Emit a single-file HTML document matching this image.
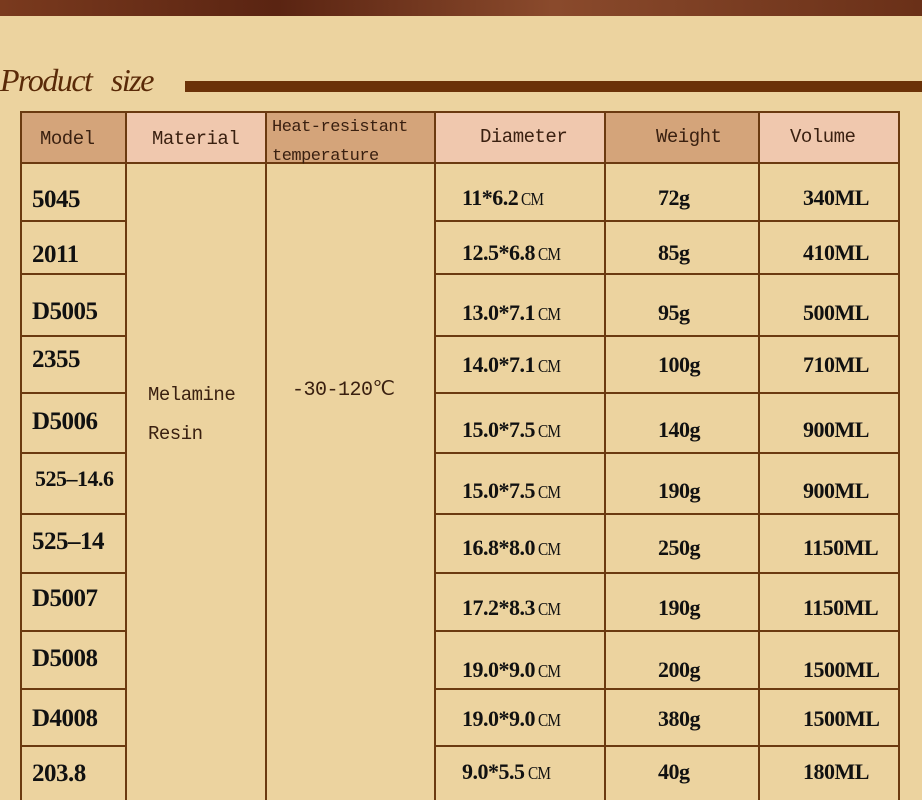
<!DOCTYPE html><html><head><style>
body{margin:0;width:922px;height:800px;overflow:hidden;background:#ecd39f;position:relative;font-family:"Liberation Serif",serif}
.a{position:absolute}
.top{left:0;top:0;width:922px;height:16px;background:linear-gradient(90deg,#7a3a1e,#5a2412 30%,#8a4a2c 60%,#6a3018)}
.t{left:0;top:62px;font-style:italic;font-size:32px;color:#5a2a08;letter-spacing:-1.5px}
.bar{left:185px;top:81px;width:737px;height:11px;background:#6b3208}
.h{font-family:"Liberation Mono",monospace;font-size:19px;color:#3a2010;box-sizing:border-box;border:2px solid #6b3a10;letter-spacing:-0.5px}
.vl{width:2px;background:#6b3a10}
.hl{height:2px;background:#6b3a10}
.c{font-weight:bold;font-size:22px;color:#111;letter-spacing:-0.5px}
.m{font-weight:bold;font-size:25px;color:#111;letter-spacing:-0.5px}
.cm{font-weight:normal;font-size:18px;margin-left:3px;letter-spacing:-1px;display:inline-block;transform:scaleX(0.85);transform-origin:left}
</style></head><body>
<div class="a top"></div>
<div class="a t">Product&nbsp;&nbsp; size</div>
<div class="a bar"></div>
<div class="a h" style="left:20px;top:111px;width:107px;height:53px;background:#d4a47a;padding:15px 0 0 18px">Model</div>
<div class="a h" style="left:125px;top:111px;width:142px;height:53px;background:#f0c8ae;padding:15px 0 0 25px">Material</div>
<div class="a h" style="left:265px;top:111px;width:171px;height:53px;background:#d4a47a;padding:0 0 0 5px;line-height:29px;font-size:17px">Heat-resistant<br>temperature</div>
<div class="a h" style="left:434px;top:111px;width:172px;height:53px;background:#f0c8ae;padding:13px 0 0 44px">Diameter</div>
<div class="a h" style="left:604px;top:111px;width:156px;height:53px;background:#d4a47a;padding:13px 0 0 50px">Weight</div>
<div class="a h" style="left:758px;top:111px;width:142px;height:53px;background:#f0c8ae;padding:13px 0 0 30px">Volume</div>
<div class="a vl" style="left:20px;top:162px;height:638px"></div>
<div class="a vl" style="left:125px;top:162px;height:638px"></div>
<div class="a vl" style="left:265px;top:162px;height:638px"></div>
<div class="a vl" style="left:434px;top:162px;height:638px"></div>
<div class="a vl" style="left:604px;top:162px;height:638px"></div>
<div class="a vl" style="left:758px;top:162px;height:638px"></div>
<div class="a vl" style="left:898px;top:162px;height:638px"></div>
<div class="a h" style="border:none;left:148px;top:376px;line-height:39px">Melamine<br>Resin</div>
<div class="a h" style="border:none;left:292px;top:376px;font-size:20px">-30-120℃</div>
<div id="rows"></div>
<script>
var ys=[162,220,273,335,392,452,513,572,630,688,745];
var d=[["5045","11*6.2","72g","340ML"],["2011","12.5*6.8","85g","410ML"],["D5005","13.0*7.1","95g","500ML"],["2355","14.0*7.1","100g","710ML"],["D5006","15.0*7.5","140g","900ML"],["525-14.6","15.0*7.5","190g","900ML"],["525-14","16.8*8.0","250g","1150ML"],["D5007","17.2*8.3","190g","1150ML"],["D5008","19.0*9.0","200g","1500ML"],["D4008","19.0*9.0","380g","1500ML"],["203.8","9.0*5.5","40g","180ML"]];
var my=[200,255,312,360,422,480,542,599,659,719,774];
var ry=[198,253,313,365,430,491,548,608,670,719,772];
var h="";
for(var i=1;i<ys.length;i++){h+='<div class="a hl" style="left:20px;top:'+ys[i]+'px;width:107px"></div><div class="a hl" style="left:434px;top:'+ys[i]+'px;width:466px"></div>';}
for(i=0;i<d.length;i++){
var fs=i==5?'font-size:22px;':'';var lx=i==5?35:32;
h+='<div class="a m" style="left:'+lx+'px;top:'+(my[i]-14)+'px;'+fs+'">'+d[i][0].replace("-","–")+'</div>';
h+='<div class="a c" style="left:462px;top:'+(ry[i]-13)+'px">'+d[i][1]+'<span class="cm">CM</span></div>';
h+='<div class="a c" style="left:658px;top:'+(ry[i]-13)+'px">'+d[i][2]+'</div>';
h+='<div class="a c" style="left:803px;top:'+(ry[i]-13)+'px">'+d[i][3]+'</div>';}
document.getElementById("rows").innerHTML=h;
</script>
</body></html>
